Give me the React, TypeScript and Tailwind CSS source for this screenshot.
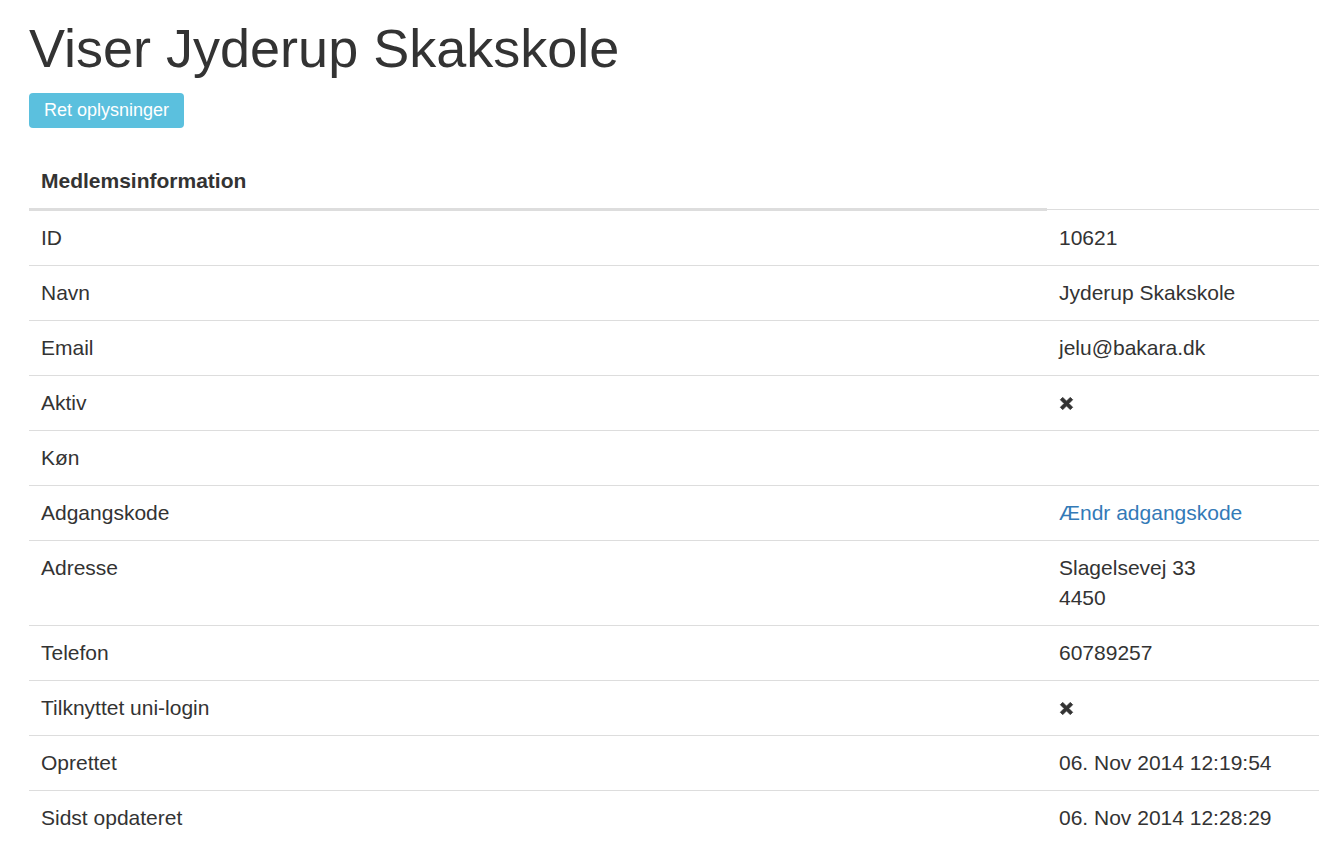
const RemoveIcon = () => (
  <svg width="15" height="15" viewBox="0 0 16 16" className="inline-block align-[-1px]">
    <path
      d="M1.5 4 4 1.5 8 5.5 12 1.5 14.5 4 10.5 8 14.5 12 12 14.5 8 10.5 4 14.5 1.5 12 5.5 8Z"
      fill="#333"
      stroke="#333"
      strokeWidth="1"
      strokeLinejoin="round"
    />
  </svg>
);

type Row = { label: string; value: React.ReactNode };

const rows: Row[] = [
  { label: "ID", value: "10621" },
  { label: "Navn", value: "Jyderup Skakskole" },
  { label: "Email", value: "jelu@bakara.dk" },
  { label: "Aktiv", value: <RemoveIcon /> },
  { label: "Køn", value: "" },
  {
    label: "Adgangskode",
    value: <a className="text-[#337ab7] cursor-pointer">Ændr adgangskode</a>,
  },
  {
    label: "Adresse",
    value: (
      <>
        Slagelsevej 33
        <br />
        4450
      </>
    ),
  },
  { label: "Telefon", value: "60789257" },
  { label: "Tilknyttet uni-login", value: <RemoveIcon /> },
  { label: "Oprettet", value: "06. Nov 2014 12:19:54" },
  { label: "Sidst opdateret", value: "06. Nov 2014 12:28:29" },
];

export default function App() {
  return (
    <div className="min-h-screen bg-white text-[#333] font-['Liberation_Sans',Arial,sans-serif] pl-[29px]">
      <h1 className="text-[54px] leading-[59px] pt-[19px] mb-[15px] font-normal">
        Viser Jyderup Skakskole
      </h1>
      <button className="h-[35px] px-[15px] bg-[#5bc0de] text-white text-[18px] leading-[35px] rounded-[4px]">
        Ret oplysninger
      </button>

      <div className="mt-[26px] text-[21px] leading-[30px]">
        {/* header */}
        <div className="flex items-start">
          <div className="w-[1018px] px-[12px] py-[12px] font-bold border-b-[3px] border-[#ddd]">
            Medlemsinformation
          </div>
          <div className="flex-1 h-[56px] border-b border-[#ddd]" />
        </div>

        {rows.map((row, i) => (
          <div
            key={row.label}
            className={
              "flex " + (i < rows.length - 1 ? "border-b border-[#ddd]" : "")
            }
          >
            <div className="w-[1018px] px-[12px] py-[12px]">{row.label}</div>
            <div className="flex-1 px-[12px] py-[12px] min-h-[54px]">{row.value}</div>
          </div>
        ))}
      </div>
    </div>
  );
}
